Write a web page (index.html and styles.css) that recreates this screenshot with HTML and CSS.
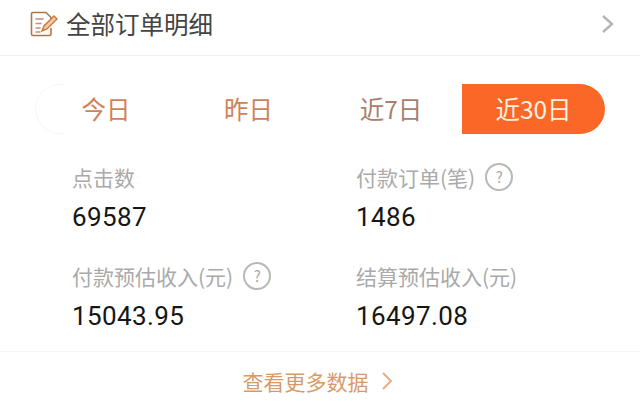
FILE: index.html
```
<!DOCTYPE html>
<html lang="zh">
<head>
<meta charset="utf-8">
<title>全部订单明细</title>
<link rel="stylesheet" href="styles.css">
</head>
<body>
<div class="page">
  <header class="head">
    <svg class="doc" viewBox="0 0 28 26" width="28" height="26" fill="none">
      <path d="M3 1.500h13l5 5v4M21 17v6a1.500 1.500 0 0 1-1.500 1.500H3A1.500 1.500 0 0 1 1.500 23V3A1.500 1.500 0 0 1 3 1.500" stroke="#b0764a" stroke-width="1.600"/>
      <path d="M5.500 8h8M5.500 12.500h6M5.500 17h5M5.500 21h5" stroke="#c09070" stroke-width="1.400"/>
      <path d="M12 20l2-5 10-10 3 3-10 10z" fill="#f8c8a0" stroke="#c9763a" stroke-width="1.400"/>
    </svg>
    <span class="title">全部订单明细</span>
    <svg class="chev" viewBox="0 0 14 20" width="14" height="20" fill="none"><path d="M2 2l9 8-9 8" stroke="#b4b4b8" stroke-width="2.400"/></svg>
  </header>
  <nav class="tabs">
    <span class="edge"></span>
    <span class="tab t1">今日</span>
    <span class="tab t2">昨日</span>
    <span class="tab t3">近7日</span>
    <span class="tab on">近30日</span>
  </nav>
  <section class="grid">
    <div class="cell">
      <div class="label">点击数</div>
      <div class="num">69587</div>
    </div>
    <div class="cell">
      <div class="label">付款订单(笔)<span class="q">?</span></div>
      <div class="num">1486</div>
    </div>
    <div class="cell">
      <div class="label">付款预估收入(元)<span class="q">?</span></div>
      <div class="num">15043.95</div>
    </div>
    <div class="cell">
      <div class="label">结算预估收入(元)</div>
      <div class="num">16497.08</div>
    </div>
  </section>
  <footer class="foot">
    <span>查看更多数据</span>
    <svg viewBox="0 0 12 20" width="12" height="20" fill="none"><path d="M2 2l8 8-8 8" stroke="#e8a878" stroke-width="1.800"/></svg>
  </footer>
</div>
</body>
</html>
```
FILE: styles.css
```
* { box-sizing: border-box; }
html, body { margin: 0; padding: 0; background: #fff; }
body { font-family: "Noto Sans CJK SC", "Roboto", sans-serif; }
.page { width: 640px; height: 410px; overflow: hidden; display: flex; flex-direction: column; }
.head { height: 56px; flex: none; display: flex; align-items: center; padding: 0 25px 8px 30px; border-bottom: 1px solid #f0f0f0; }
.doc { flex: none; }
.title { margin-left: 8px; font-size: 24.500px; line-height: 30px; color: #444; flex: 1; }
.tabs { flex: none; height: 50px; margin: 28px 35px 0 35px; display: flex; align-items: center; position: relative; font-size: 24.500px; }
.edge { position: absolute; left: 0; top: 0; width: 30px; height: 50px; border: 1px solid #f6f6f6; border-right: 0; border-radius: 25px 0 0 25px; }
.tab { display: block; text-align: center; line-height: 50px; color: #cf8258; }
.t1 { width: 142px; }
.t2 { width: 143px; }
.t3 { width: 142px; color: #a8806c; }
.on { width: 143px; height: 50px; background: #fb6727; color: #fff2e0; border-radius: 0 25px 25px 0; }
.grid { flex: none; margin: 28px 0 0 72px; display: grid; grid-template-columns: 284px 1fr; row-gap: 29px; }
.cell { height: 70px; }
.label { display: flex; align-items: center; height: 30px; font-size: 21px; color: #aaa; }
.q { width: 28px; height: 28px; margin-left: 10px; border: 2px solid #b8b8b8; border-radius: 50%; font-size: 15px; line-height: 24px; text-align: center; color: #aaa; }
.num { margin-top: 10px; font-family: "Roboto", sans-serif; font-size: 26px; line-height: 30px; letter-spacing: 0.400px; color: #161616; }
.foot { flex: none; margin-top: 20px; height: 60px; border-top: 1px solid #f5f5f5; display: flex; align-items: center; justify-content: center; gap: 12px; font-size: 21px; color: #d99a68; padding: 0 5px 2px 0; }
```
